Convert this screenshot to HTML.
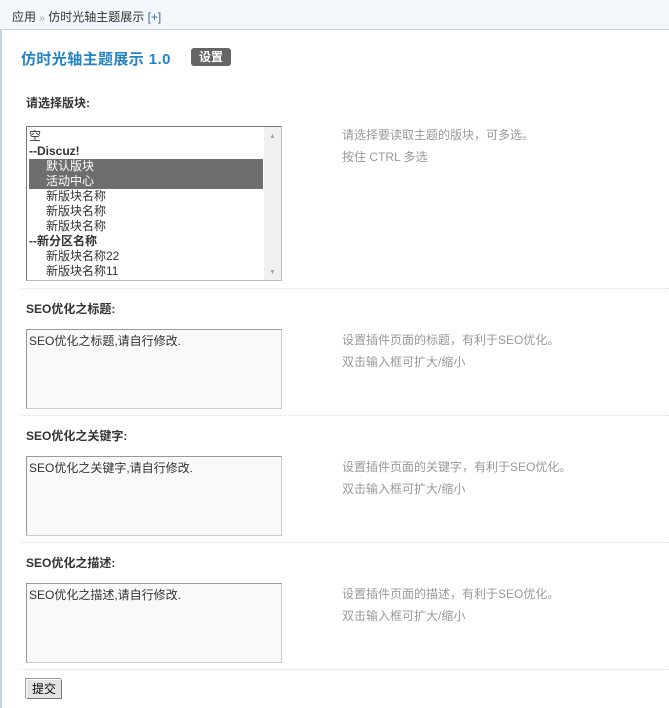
<!DOCTYPE html>
<html><head><meta charset="utf-8"><style>
body{margin:0;width:669px;height:708px;position:relative;background:#fff;font-family:"Liberation Sans","Noto Sans CJK SC",sans-serif;font-size:12px;color:#333;overflow:hidden}
.a{position:absolute;white-space:nowrap}
.top{position:absolute;left:0;top:0;width:669px;height:29px;background:#f3f7fb;border-bottom:1px solid #c6d5e0}
.lb{position:absolute;left:0;top:30px;width:2px;height:678px;background:#c6d5e0}
.lab{font-weight:bold;color:#333;font-size:12px}
.hint{color:#999;font-size:12px;line-height:22px}
.sep{position:absolute;left:20px;width:649px;border-top:1px dotted #d8dee4}
.ta{position:absolute;left:26px;width:256px;height:80px;border:1px solid #999;border-right-color:#ccc;border-bottom-color:#ccc;background:#f9f9f9;font-size:12px;color:#333;padding:2px 2px;box-sizing:border-box}
.sel{position:absolute;left:26px;top:126px;width:256px;height:155px;border:1px solid #777;border-right-color:#bbb;border-bottom-color:#bbb;box-sizing:border-box;background:#fff}
.row{position:absolute;left:2px;height:15px;line-height:15px;font-size:12px;color:#333;width:234px}
.sb{position:absolute;right:0;top:0;width:17px;height:153px;background:#f0f0f0}
</style></head><body>
<div class="top"></div>
<div class="a" style="left:12px;top:8px;color:#333">应用 <span style="color:#999;font-size:10px">»</span> 仿时光轴主题展示 <span style="color:#336699">[+]</span></div>
<div class="lb"></div>
<div class="a" style="left:21px;top:48px;font-size:15px;letter-spacing:0.4px;font-weight:bold;color:#2283c5">仿时光轴主题展示 1.0</div>
<div class="a" style="left:191px;top:48px;width:40px;height:18px;background:#666;color:#fff;border-radius:3px;font-weight:bold;text-align:center;line-height:18px">设置</div>

<div class="a lab" style="left:26px;top:94px">请选择版块:</div>
<div class="sel">
<div class="row" style="top:2px">空</div>
<div class="row" style="top:17px;font-weight:bold">--Discuz!</div>
<div class="row" style="top:32px;background:#6e6e6e;color:#fff;height:30px"><div style="padding-left:17px">默认版块</div><div style="padding-left:17px">活动中心</div></div>
<div class="row" style="top:62px;padding-left:17px">新版块名称</div>
<div class="row" style="top:77px;padding-left:17px">新版块名称</div>
<div class="row" style="top:92px;padding-left:17px">新版块名称</div>
<div class="row" style="top:107px;font-weight:bold">--新分区名称</div>
<div class="row" style="top:122px;padding-left:17px">新版块名称22</div>
<div class="row" style="top:137px;padding-left:17px">新版块名称11</div>
<div class="sb"><div style="position:absolute;left:5px;top:6px;color:#aaa;font-size:7px">▲</div><div style="position:absolute;left:5px;bottom:4px;color:#aaa;font-size:7px">▼</div></div>
</div>
<div class="a hint" style="left:342px;top:124px">请选择要读取主题的版块，可多选。<br>按住 CTRL 多选</div>
<div class="sep" style="top:288px"></div>

<div class="a lab" style="left:26px;top:300px">SEO优化之标题:</div>
<div class="ta" style="top:329px">SEO优化之标题,请自行修改.</div>
<div class="a hint" style="left:342px;top:329px">设置插件页面的标题，有利于SEO优化。<br>双击输入框可扩大/缩小</div>
<div class="sep" style="top:415px"></div>

<div class="a lab" style="left:26px;top:427px">SEO优化之关键字:</div>
<div class="ta" style="top:456px">SEO优化之关键字,请自行修改.</div>
<div class="a hint" style="left:342px;top:456px">设置插件页面的关键字，有利于SEO优化。<br>双击输入框可扩大/缩小</div>
<div class="sep" style="top:542px"></div>

<div class="a lab" style="left:26px;top:554px">SEO优化之描述:</div>
<div class="ta" style="top:583px">SEO优化之描述,请自行修改.</div>
<div class="a hint" style="left:342px;top:583px">设置插件页面的描述，有利于SEO优化。<br>双击输入框可扩大/缩小</div>
<div class="sep" style="top:669px"></div>

<div class="a" style="left:26px;top:679px;width:34px;height:18px;background:#e4e4e4;border:1px solid #777;border-top-color:#fff;border-left-color:#fff;box-shadow:-1px -1px 0 #999;line-height:18px;text-align:center;color:#000">提交</div>
</body></html>
